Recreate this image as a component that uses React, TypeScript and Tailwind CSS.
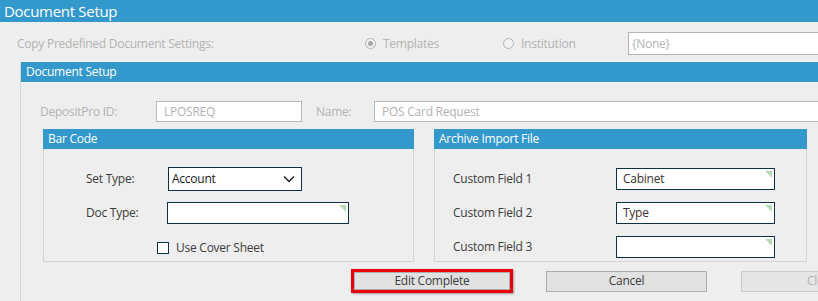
const font = { fontFamily: '"Open Sans", "Noto Sans", sans-serif' }

function Corner() {
  return (
    <svg width="7" height="7" viewBox="0 0 7 7" className="absolute right-[2px] top-[2px]">
      <polygon points="0,0 7,0 7,7" fill="#b5d9b5" />
    </svg>
  )
}

function Field({ width, value, corner = true }: { width: string; value?: string; corner?: boolean }) {
  return (
    <div className={`relative flex h-[22px] shrink-0 items-center border border-[#0e3146] bg-white pl-[6px] text-[#3a3030] ${width}`}>
      {value}
      {corner && <Corner />}
    </div>
  )
}

function Radio({ checked, label }: { checked?: boolean; label: string }) {
  return (
    <div className="flex items-center">
      <span className="flex h-[11px] w-[11px] shrink-0 items-center justify-center rounded-full border border-[#b3b3b3] bg-[#f2f2f2]">
        {checked && <span className="h-[5px] w-[5px] rounded-full bg-[#a6a6a6]" />}
      </span>
      <span className="ml-[7px] text-[#b3b3b3]">{label}</span>
    </div>
  )
}

function GroupHeader({ title }: { title: string }) {
  return <div className="h-[20px] shrink-0 bg-[#3399cc] pl-[5px] leading-[20px] text-white">{title}</div>
}

export default function App() {
  return (
    <div className="h-[301px] w-[818px] overflow-hidden bg-[#eeeeee] text-[12px] leading-[18px] tracking-[-0.25px]" style={font}>
      <div className="h-[22px] bg-[#3399cc] pl-[4px] text-[15px] leading-[22px] tracking-[-0.3px] text-white">Document Setup</div>

      <div className="mt-[10px] flex h-[23px] items-center">
        <div className="w-[365px] shrink-0 pl-[17px] text-[#b3b3b3]">Copy Predefined Document Settings:</div>
        <div className="w-[137px] shrink-0">
          <Radio checked label="Templates" />
        </div>
        <div className="w-[126px] shrink-0 pl-[1px]">
          <Radio label="Institution" />
        </div>
        <div className="flex h-[23px] w-[220px] shrink-0 items-center border border-[#b3b3b3] bg-white pl-[3px] text-[#b3b3b3]">
          {'{None}'}
        </div>
      </div>

      <div className="ml-[20px] mt-[7px] flex h-[250px] w-[1000px] flex-col border-l border-[#d6d6d6]">
        <GroupHeader title="Document Setup" />

        <div className="mt-[19px] flex h-[21px] shrink-0 items-center text-[#b3b3b3]">
          <div className="w-[135px] shrink-0 pl-[19px]">DepositPro ID:</div>
          <div className="flex h-[21px] w-[146px] shrink-0 items-center border border-[#b8b8b8] bg-white pl-[7px]">LPOSREQ</div>
          <div className="w-[72px] shrink-0 pl-[14px]">Name:</div>
          <div className="flex h-[21px] w-[460px] shrink-0 items-center border border-[#b8b8b8] bg-white pl-[7px]">POS Card Request</div>
        </div>

        <div className="ml-[22px] mt-[7px] flex h-[133px] shrink-0 gap-[20px] text-[#3c3c3c]">
          <div className="flex w-[371px] shrink-0 flex-col">
            <GroupHeader title="Bar Code" />
            <div className="h-[113px] shrink-0 border-x border-b border-[#d4d4d4]">
              <div className="mt-[18px] flex h-[24px] items-center">
                <div className="w-[124px] shrink-0 pl-[42px]">Set Type:</div>
                <div className="flex h-[24px] w-[134px] shrink-0 items-center justify-between border border-[#0e3146] bg-white pl-[3px] pr-[6px] text-[#1a1a1a]">
                  Account
                  <svg width="12" height="8" viewBox="0 0 12 8">
                    <polyline points="1,1.5 6,6.5 11,1.5" fill="none" stroke="#222" strokeWidth="1.5" />
                  </svg>
                </div>
              </div>
              <div className="mt-[11px] flex h-[22px] items-center">
                <div className="w-[123px] shrink-0 pl-[42px]">Doc Type:</div>
                <Field width="w-[182px]" />
              </div>
              <div className="mt-[17px] flex h-[14px] items-center pl-[113px]">
                <span className="h-[12px] w-[12px] shrink-0 border border-[#0e3146] bg-white" />
                <span className="ml-[7px]">Use Cover Sheet</span>
              </div>
            </div>
          </div>

          <div className="flex w-[373px] shrink-0 flex-col">
            <GroupHeader title="Archive Import File" />
            <div className="flex h-[113px] shrink-0 flex-col gap-[12px] border-x border-b border-[#d4d4d4] pt-[19px]">
              {[
                ['Custom Field 1', 'Cabinet'],
                ['Custom Field 2', 'Type'],
                ['Custom Field 3', ''],
              ].map(([label, value]) => (
                <div key={label} className="flex h-[22px] shrink-0 items-center">
                  <div className="w-[181px] shrink-0 pl-[18px]">{label}</div>
                  <Field width="w-[159px]" value={value} />
                </div>
              ))}
            </div>
          </div>
        </div>

        <div className="ml-[330px] mt-[7px] flex h-[24px] shrink-0 items-center">
          <div className="shrink-0 border-[3px] border-[#e8000b] shadow-[1px_1px_2px_rgba(0,0,0,0.35)]">
            <div className="flex h-[18px] w-[156px] items-center justify-center border border-[#adadad] bg-[#e1e1e1] text-[#3c3c3c]">
              Edit Complete
            </div>
          </div>
          <div className="ml-[33px] flex h-[21px] w-[161px] shrink-0 items-center justify-center border border-[#adadad] bg-[#e1e1e1] text-[#3c3c3c]">
            Cancel
          </div>
          <div className="ml-[34px] flex h-[21px] w-[161px] shrink-0 items-center justify-center border border-[#cccccc] bg-[#e5e5e5] text-[#b3b3b3]">
            Close
          </div>
        </div>
      </div>
    </div>
  )
}
